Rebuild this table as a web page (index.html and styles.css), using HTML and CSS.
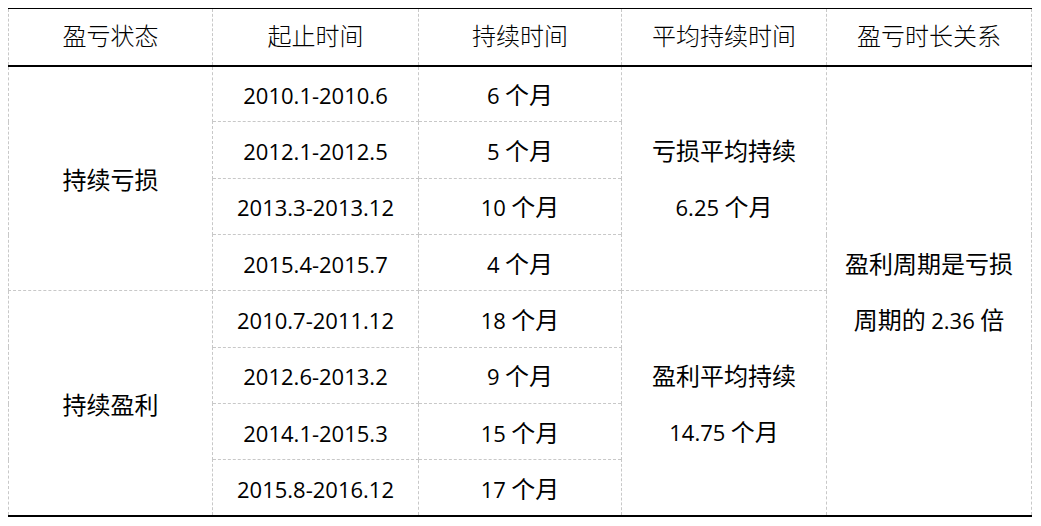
FILE: index.html
```html
<!DOCTYPE html>
<html lang="zh-CN">
<head>
<meta charset="utf-8">
<link rel="stylesheet" href="styles.css">
</head>
<body>
<table class="grid">
  <colgroup>
    <col class="c1"><col class="c2"><col class="c3"><col class="c4"><col class="c5">
  </colgroup>
  <thead>
    <tr class="head">
      <th>盈亏状态</th><th>起止时间</th><th>持续时间</th><th>平均持续时间</th><th>盈亏时长关系</th>
    </tr>
  </thead>
  <tbody>
    <tr>
      <td rowspan="4">持续亏损</td>
      <td><span class="num">2010.1-2010.6</span></td><td><span class="num">6</span> 个月</td>
      <td rowspan="4" class="multi">亏损平均持续<br><span class="num">6.25</span> 个月</td>
      <td rowspan="8" class="multi">盈利周期是亏损<br>周期的 <span class="num">2.36</span> 倍</td>
    </tr>
    <tr><td><span class="num">2012.1-2012.5</span></td><td><span class="num">5</span> 个月</td></tr>
    <tr><td><span class="num">2013.3-2013.12</span></td><td><span class="num">10</span> 个月</td></tr>
    <tr><td><span class="num">2015.4-2015.7</span></td><td><span class="num">4</span> 个月</td></tr>
    <tr>
      <td rowspan="4">持续盈利</td>
      <td><span class="num">2010.7-2011.12</span></td><td><span class="num">18</span> 个月</td>
      <td rowspan="4" class="multi">盈利平均持续<br><span class="num">14.75</span> 个月</td>
    </tr>
    <tr><td><span class="num">2012.6-2013.2</span></td><td><span class="num">9</span> 个月</td></tr>
    <tr><td><span class="num">2014.1-2015.3</span></td><td><span class="num">15</span> 个月</td></tr>
    <tr><td><span class="num">2015.8-2016.12</span></td><td><span class="num">17</span> 个月</td></tr>
  </tbody>
</table>
</body>
</html>
```
FILE: styles.css
```css
html, body {
  margin: 0;
  padding: 0;
  background: #ffffff;
}
body {
  padding: 8px 0 0 8px;
}
.grid {
  border-collapse: collapse;
  table-layout: fixed;
  width: 1023px;
  font-family: "Noto Sans CJK SC", sans-serif;
  color: #000;
}
.c1 { width: 204px; }
.c2 { width: 206px; }
.c3 { width: 203px; }
.c4 { width: 205px; }
.c5 { width: 205px; }
.grid th,
.grid td {
  border: 1px dashed #c8c8c8;
  padding: 0;
  text-align: center;
  vertical-align: middle;
  font-size: 24px;
  font-weight: 400;
  line-height: 30px;
}
.grid thead {
  border-top: 1px solid #000;
  border-bottom: 2px solid #000;
}
.grid tbody {
  border-bottom: 2px solid #000;
}
.grid thead th {
  height: 57px;
  font-weight: 300;
  font-size: 24px;
  padding-bottom: 4px;
  box-sizing: border-box;
}
.grid tbody td {
  height: 56.35px;
  padding-top: 1px;
  box-sizing: border-box;
}
.num {
  font-family: "Open Sans", sans-serif;
  font-size: 22px;
}
.grid td.multi {
  line-height: 56px;
}
```
